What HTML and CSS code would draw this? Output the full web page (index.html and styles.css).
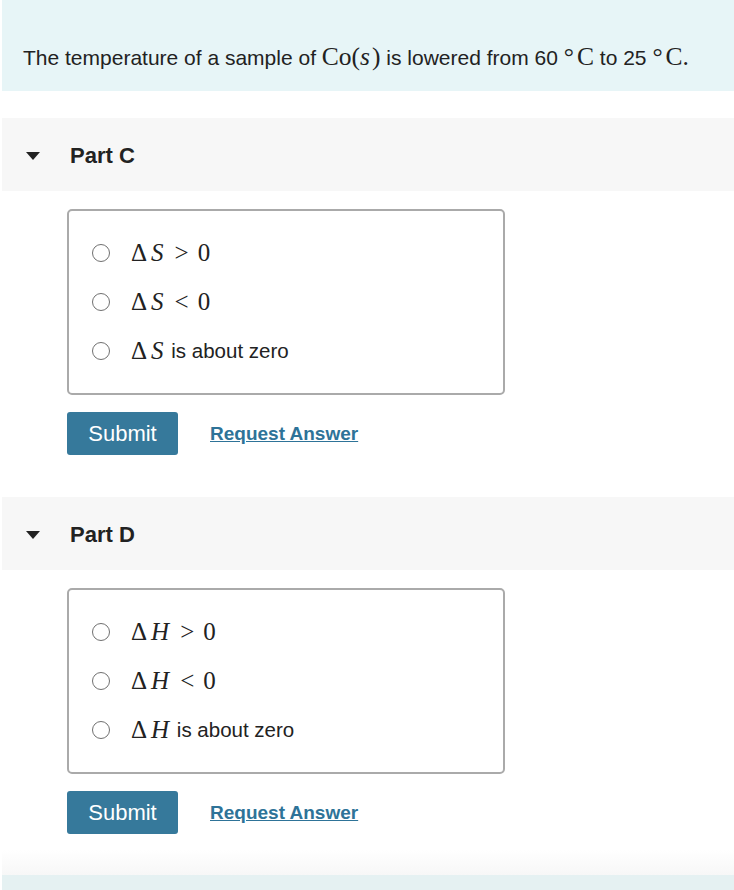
FILE: index.html
```html
<!DOCTYPE html>
<html>
<head>
<meta charset="utf-8">
<link rel="stylesheet" href="styles.css">
</head>
<body>
<div class="page">
  <div class="intro">
    <p>The temperature of a sample of <span class="m">Co(<i>s</i>)</span> is lowered from 60 <span class="m"><span class="deg">°</span>C</span> to 25 <span class="m"><span class="deg">°</span>C.</span></p>
  </div>

  <section class="part">
    <div class="part-head"><span class="caret"></span><h2>Part C</h2></div>
    <div class="part-body">
      <div class="choices">
        <label class="choice"><span class="radio"></span><span class="m"><span class="dl">Δ</span><i>S</i><span class="rel">&gt;</span>0</span></label>
        <label class="choice"><span class="radio"></span><span class="m"><span class="dl">Δ</span><i>S</i><span class="rel">&lt;</span>0</span></label>
        <label class="choice"><span class="radio"></span><span class="m"><span class="dl">Δ</span><i>S</i></span>&nbsp;is about zero</label>
      </div>
      <div class="actions">
        <button class="submit">Submit</button>
        <a class="req" href="#">Request Answer</a>
      </div>
    </div>
  </section>

  <section class="part">
    <div class="part-head"><span class="caret"></span><h2>Part D</h2></div>
    <div class="part-body">
      <div class="choices">
        <label class="choice"><span class="radio"></span><span class="m"><span class="dl">Δ</span><i>H</i><span class="rel">&gt;</span>0</span></label>
        <label class="choice"><span class="radio"></span><span class="m"><span class="dl">Δ</span><i>H</i><span class="rel">&lt;</span>0</span></label>
        <label class="choice"><span class="radio"></span><span class="m"><span class="dl">Δ</span><i>H</i></span>&nbsp;is about zero</label>
      </div>
      <div class="actions">
        <button class="submit">Submit</button>
        <a class="req" href="#">Request Answer</a>
      </div>
    </div>
  </section>

  <div class="fade"></div>
  <div class="next"></div>
</div>
</body>
</html>
```

FILE: styles.css
```css
html, body {
  margin: 0;
  padding: 0;
  background: #fff;
}
body {
  font-family: "Liberation Sans", Arial, sans-serif;
  color: #222;
  overflow: hidden;
}
.page {
  padding-left: 2px;
  display: flex;
  flex-direction: column;
}
.intro {
  background: #e7f5f7;
  height: 91px;
  box-sizing: border-box;
  padding: 44px 0 0 21px;
}
.intro p {
  margin: 0;
  font-size: 21px;
  line-height: 26px;
  color: #222;
  white-space: nowrap;
}
.m {
  font-family: "Liberation Serif", "Times New Roman", serif;
  font-size: 25.5px;
}
.m i {
  padding-right: 2px;
}
.dl {
  padding-right: 2px;
}
.choice .dl {
  padding-right: 4px;
}
.deg {
  margin-right: 3px;
}
.rel {
  margin: 0 9px;
}
.part {
  margin-top: 27px;
}
.part + .part {
  margin-top: 42px;
}
.part-head {
  background: #f7f7f7;
  height: 73px;
  display: flex;
  align-items: center;
  padding-left: 24px;
  padding-top: 3px;
  box-sizing: border-box;
}
.caret {
  width: 0;
  height: 0;
  border-left: 7px solid transparent;
  border-right: 7px solid transparent;
  border-top: 8px solid #222;
  margin-right: 30px;
  margin-top: -1px;
}
.part-head h2 {
  margin: 0;
  font-size: 22px;
  font-weight: bold;
  color: #222;
  line-height: 26px;
}
.part-body {
  padding: 18px 0 0 65px;
}
.choices {
  width: 438px;
  box-sizing: border-box;
  border: 2px solid #aaa;
  border-radius: 5px;
  padding: 27px 0 27px 24px;
  display: flex;
  flex-direction: column;
  gap: 19px;
}
.choice {
  display: flex;
  align-items: center;
  height: 30px;
  font-size: 20.5px;
  color: #222;
}
.choice .m {
  font-size: 25px;
}
.radio {
  width: 18px;
  height: 18px;
  box-sizing: border-box;
  border: 1.5px solid #707070;
  border-radius: 50%;
  margin-right: 21px;
  margin-left: -1px;
  background: #fff;
}
.actions {
  display: flex;
  align-items: center;
  margin-top: 17px;
  gap: 32px;
}
.submit {
  width: 111px;
  height: 43px;
  background: #36799b;
  color: #fff;
  border: none;
  border-radius: 3px;
  font-family: "Liberation Sans", Arial, sans-serif;
  font-size: 22px;
  padding: 0;
}
.req {
  color: #2e7398;
  font-weight: bold;
  font-size: 19px;
  text-decoration: underline;
}
.fade {
  height: 25px;
  margin-top: 16px;
  background: linear-gradient(#fff, #f7f7f7);
}
.next {
  height: 40px;
  background: #e5f1f2;
}
```
